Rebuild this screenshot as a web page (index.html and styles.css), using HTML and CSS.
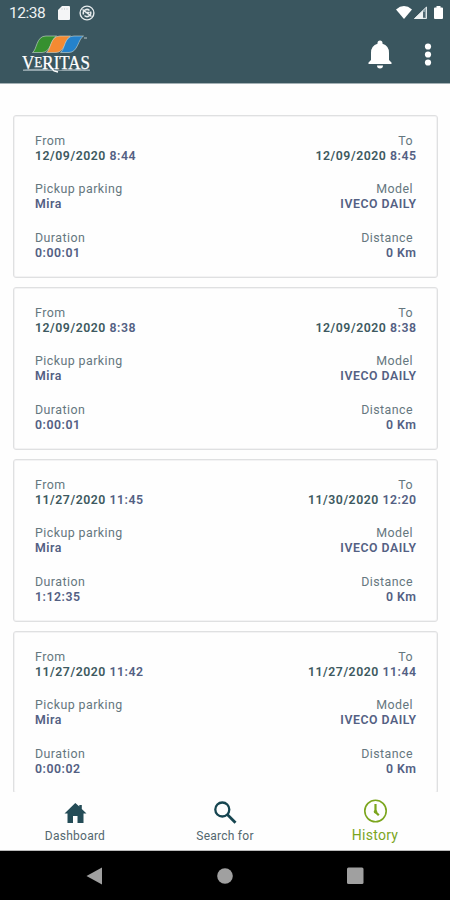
FILE: index.html
```
<!DOCTYPE html>
<html lang="en">
<head>
<meta charset="utf-8">
<title>Veritas - History</title>
<link rel="stylesheet" href="styles.css">
</head>
<body>
<div class="screen">
  <header class="top">
    <div class="status">
      <span class="time">12:38</span>
      <svg class="sd" width="12" height="14" viewBox="0 0 12 14"><path d="M4 0h7q1 0 1 1v12q0 1-1 1H1q-1 0-1-1V4z" fill="#f4f5f6"/><path d="M4 2v2M6.500 2v2M9 2v2" stroke="#d5dcdf"/></svg>
      <svg class="sync" width="16" height="16" viewBox="0 0 16 16" fill="none" stroke="#e6ebed"><circle cx="8" cy="8" r="6.900" stroke-width="1.400"/><path d="M4.500 9.500a3.700 3.700 0 0 1 6-4M11.500 6.500a3.700 3.700 0 0 1-6 4M3.500 4.500l9 7M6.500 7.500h4" stroke-width="1.500"/></svg>
      <svg class="signals" width="48" height="16" viewBox="0 0 48 16"><path d="M0 4.500Q8-2.300 16 4.500L8 14z" fill="#fff"/><path d="M30.500 2v11.500H18.500z" fill="#8ba0a7" stroke="#dfe6e8"/><path d="M27 5.500V14H18z" fill="#eef2f3"/><path d="M28 7v5.500" stroke="#3b555f" stroke-width="1.500"/><path d="M40.500 1h4v1.500H46q1 0 1 1v9.500q0 1-1 1h-7q-1 0-1-1V3.500q0-1 1-1h1.500z" fill="#fff"/></svg>
    </div>
    <div class="appbar">
      <svg class="logo" width="70" height="40" viewBox="0 0 70 40">
        <g stroke="#cdd9d2" stroke-width=".6">
          <path d="M10.500 17.500C15 15 14 1 24 1H34.500C29 4 29 17.500 20 17.500Z" fill="#36902f"/>
          <path d="M24.500 17.500C29 15 28 1 38 1H48.500C43 4 43 17.500 34 17.500Z" fill="#f48a32"/>
          <path d="M38.500 17.500C43 15 42 1 52 1H61.500C56 4 56 17.500 47 17.500Z" fill="#2582cb"/>
        </g>
        <path d="M1 34.500Q15 33 27 34.500T44 34.500Q54 33.500 68 34.500V36H1Z" fill="#91a3aa"/>
        <g class="brand"><text x="0" y="34" font-size="18" textLength="68" lengthAdjust="spacingAndGlyphs">V<tspan font-size="14" dy="-2">E</tspan><tspan dy="2">RITAS</tspan></text></g>
        <path d="M26 29l6 7 4 1" fill="none" stroke="#fff" stroke-width="1.300"/>
        <path d="M62 3h3" stroke="#b9c5c9"/>
      </svg>
      <svg class="bell" width="24" height="29" viewBox="0 0 24 29" fill="#fff"><path d="M9.500 3a2.500 2.500 0 0 1 5 0v.8Q21 5.500 21 13v7l2.500 2.500V24H.5v-1.500L3 20v-7q0-7.500 6.500-9.200zM9 25.500h6a3 3 0 0 1-6 0z"/></svg>
      <svg class="more" width="8" height="23" viewBox="0 0 8 23" fill="#fff"><circle cx="4" cy="3.500" r="3.100"/><circle cx="4" cy="11.500" r="3.100"/><circle cx="4" cy="19.500" r="3.100"/></svg>
    </div>
  </header>
  <main class="list">
    <article class="card">
      <div class="row"><div><p>From</p><b><span class="date">12/09/2020</span> 8:44</b></div><div class="end"><p>To</p><b><span class="date">12/09/2020</span> 8:45</b></div></div>
      <div class="row"><div><p>Pickup parking</p><b>Mira</b></div><div class="end"><p>Model</p><b>IVECO DAILY</b></div></div>
      <div class="row"><div><p>Duration</p><b>0:00:01</b></div><div class="end"><p>Distance</p><b>0 Km</b></div></div>
    </article>
    <article class="card">
      <div class="row"><div><p>From</p><b><span class="date">12/09/2020</span> 8:38</b></div><div class="end"><p>To</p><b><span class="date">12/09/2020</span> 8:38</b></div></div>
      <div class="row"><div><p>Pickup parking</p><b>Mira</b></div><div class="end"><p>Model</p><b>IVECO DAILY</b></div></div>
      <div class="row"><div><p>Duration</p><b>0:00:01</b></div><div class="end"><p>Distance</p><b>0 Km</b></div></div>
    </article>
    <article class="card">
      <div class="row"><div><p>From</p><b><span class="date">11/27/2020</span> 11:45</b></div><div class="end"><p>To</p><b><span class="date">11/30/2020</span> 12:20</b></div></div>
      <div class="row"><div><p>Pickup parking</p><b>Mira</b></div><div class="end"><p>Model</p><b>IVECO DAILY</b></div></div>
      <div class="row"><div><p>Duration</p><b>1:12:35</b></div><div class="end"><p>Distance</p><b>0 Km</b></div></div>
    </article>
    <article class="card">
      <div class="row"><div><p>From</p><b><span class="date">11/27/2020</span> 11:42</b></div><div class="end"><p>To</p><b><span class="date">11/27/2020</span> 11:44</b></div></div>
      <div class="row"><div><p>Pickup parking</p><b>Mira</b></div><div class="end"><p>Model</p><b>IVECO DAILY</b></div></div>
      <div class="row"><div><p>Duration</p><b>0:00:02</b></div><div class="end"><p>Distance</p><b>0 Km</b></div></div>
    </article>
  </main>
  <nav class="tabs">
    <a class="tab"><svg width="24" height="24" viewBox="0 0 24 24" fill="#244c57"><path d="M12.300 3l4 3.600V5h2.500v3.900L23.500 13.500h-3V23h-6v-7h-4.500v7H4.500v-9.500H1.500z"/></svg><span>Dashboard</span></a>
    <a class="tab"><svg width="24" height="24" viewBox="0 0 24 24" fill="none" stroke="#164550" stroke-width="2.300"><circle cx="9.300" cy="9.500" r="7"/><path d="M14.300 14.500l8.200 8.200" stroke-width="2.800"/></svg><span>Search for</span></a>
    <a class="tab active"><svg width="24" height="24" viewBox="0 0 24 24" fill="none" stroke="#7ba51d"><circle cx="12.500" cy="12" r="10.700" stroke-width="1.600"/><path d="M12.500 5v8l3.300 3.300" stroke-width="2.200"/><circle cx="12.500" cy="12.800" r="1.800" fill="#7ba51d" stroke="none"/></svg><span>History</span></a>
  </nav>
  <footer class="sysnav">
    <svg width="18" height="18" viewBox="0 0 18 18"><path d="M.5 9L16 .5v17z" fill="#a0a0a0"/></svg>
    <svg width="18" height="18" viewBox="0 0 18 18"><circle cx="9" cy="9" r="7.800" fill="#a0a0a0"/></svg>
    <svg width="18" height="18" viewBox="0 0 18 18"><rect x="1" y=".5" width="16.500" height="16.500" rx="1.500" fill="#a0a0a0"/></svg>
  </footer>
</div>
</body>
</html>
```
FILE: styles.css
```
* { box-sizing: border-box; }
body { margin: 0; font-family: Roboto, sans-serif; }
.screen { width: 450px; height: 900px; display: flex; flex-direction: column; overflow: hidden; background: #fefefe; }
.top { height: 84px; flex: none; background: #3a565f; border-bottom: 1px solid #a4b1b5; }
.status { height: 26px; display: flex; align-items: center; padding: 0 6px 0 9px; }
.time { width: 49px; font-size: 15.5px; line-height: 26px; letter-spacing: -.45px; color: #eef2f3; }
.sync { margin-left: 9px; }
.signals { margin-left: auto; }
.appbar { height: 57px; display: flex; align-items: center; padding: 0 18px 0 22px; }
.logo { margin-top: 1px; }
.brand { fill: #fff; stroke: #fff; stroke-width: .25px; font-family: "Liberation Serif", serif; }
.bell { margin-left: auto; margin-right: 32px; }
.more { margin-right: .5px; }
.list { flex: 1; min-height: 0; overflow: hidden; padding: 31px 12px 0 13px; display: flex; flex-direction: column; gap: 9px; }
.card { flex: none; height: 163px; border: 1px solid #dfe0e1; box-shadow: inset 0 0 0 1px #f3f3f4; border-radius: 3px; background: #fefefe; padding: 17px 21px 0; display: flex; flex-direction: column; gap: 16.6px; }
.row { display: flex; justify-content: space-between; }
.row p { margin: 0; font-size: 12.4px; line-height: 16px; letter-spacing: .45px; color: #65777e; }
.row b { display: block; font-size: 12.3px; font-weight: 600; line-height: 15.8px; letter-spacing: .53px; margin-right: -.5px; color: #536083; white-space: nowrap; }
.row .date { color: #3d5960; }
.end { text-align: right; }
.end p { padding-right: 3px; }
.tabs { height: 59px; flex: none; display: flex; background: #fefefe; border-bottom: 1px solid #bbb; }
.tab { flex: 1; display: flex; flex-direction: column; align-items: center; padding-top: 8px; font-size: 12px; line-height: 16px; letter-spacing: .25px; color: #53676e; }
.tab span { margin-top: 4px; }
.active { padding-top: 7px; font-size: 14px; color: #7ba51d; }
.sysnav { height: 49px; flex: none; display: flex; justify-content: space-between; align-items: center; padding: 0 86px; background: #000; }
```
